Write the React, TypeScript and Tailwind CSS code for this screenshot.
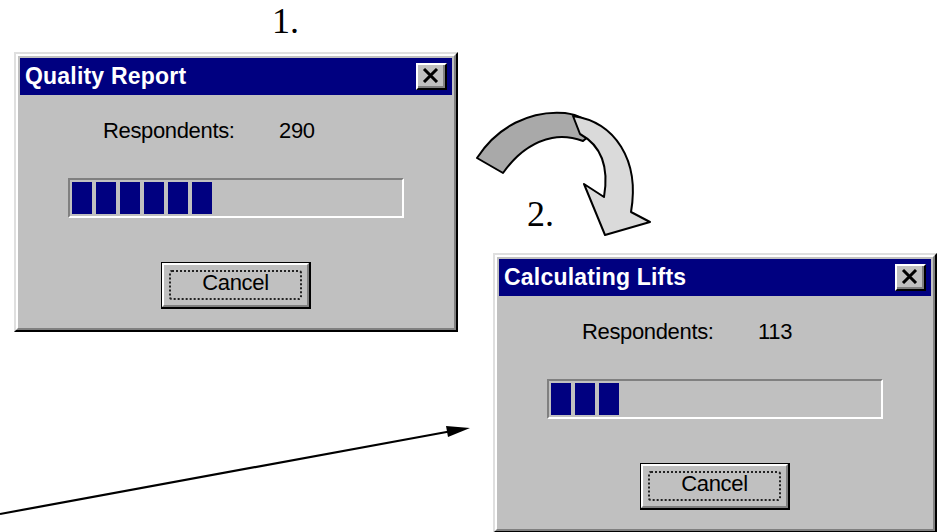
import React from "react";

type DialogProps = {
  title: string;
  count: number;
  blocks: number;
  className: string;
};

function CloseButton() {
  return (
    <div className="w-[31px] h-[27px] bg-[#c0c0c0] border-t-2 border-l-2 border-t-white border-l-white border-r-2 border-b-2 border-r-black border-b-black flex">
      <div className="flex-1 flex items-center justify-center border-r-2 border-b-2 border-r-[#808080] border-b-[#808080]">
        <svg width="17" height="15" viewBox="0 0 17 15">
          <path d="M2 1 L15 14 M15 1 L2 14" stroke="black" strokeWidth="3" />
        </svg>
      </div>
    </div>
  );
}

function ProgressDialog({ title, count, blocks, className }: DialogProps) {
  return (
    <div
      className={`absolute w-[444px] h-[280px] border-2 border-t-[#dfdfdf] border-l-[#dfdfdf] border-r-black border-b-black ${className}`}
    >
      <div className="h-full flex flex-col bg-[#c0c0c0] border-2 border-t-white border-l-white border-r-[#808080] border-b-[#808080] p-[2px] font-['Liberation_Sans',Arial,sans-serif]">
        {/* title bar */}
        <div className="h-[37px] shrink-0 bg-[#000080] flex items-center justify-between pl-[5px] pr-[5px]">
          <span className="text-white font-bold text-[23px] leading-none tracking-[0.2px]">{title}</span>
          <CloseButton />
        </div>

        {/* respondents */}
        <div className="mt-[24px] flex text-[22px] leading-[24px] tracking-[-0.35px] text-black pl-[83px]">
          <span className="w-[176px]">Respondents:</span>
          <span>{count}</span>
        </div>

        {/* progress */}
        <div className="mt-[35px] ml-[48px] w-[336px] h-[40px] border-2 border-t-[#808080] border-l-[#808080] border-r-white border-b-white p-[2px] flex gap-[4px]">
          {Array.from({ length: blocks }).map((_, i) => (
            <div key={i} className="w-[20px] h-full bg-[#000080]" />
          ))}
        </div>

        {/* cancel */}
        <div className="mt-[44px] mx-auto w-[150px] h-[47px] border-t border-l border-r-2 border-b-2 border-black flex">
          <div className="flex-1 flex border-2 border-t-white border-l-white border-r-[#808080] border-b-[#808080] p-[5px]">
            <div className="flex-1 flex items-center justify-center border-2 border-dotted border-[#222] rounded-[3px] pb-[4px] text-[22px] tracking-[-0.35px] text-black leading-none">
              Cancel
            </div>
          </div>
        </div>
      </div>
    </div>
  );
}

export default function App() {
  return (
    <div className="relative w-[938px] h-[532px] bg-white overflow-hidden">
      <span className="absolute left-[272px] top-[3px] text-[36px] leading-[36px] text-black font-['Liberation_Serif','Times_New_Roman',serif]">
        1.
      </span>
      <span className="absolute left-[527px] top-[196px] text-[36px] leading-[36px] text-black font-['Liberation_Serif','Times_New_Roman',serif]">
        2.
      </span>

      <ProgressDialog title="Quality Report" count={290} blocks={6} className="left-[14px] top-[52px]" />
      <ProgressDialog title="Calculating Lifts" count={113} blocks={3} className="left-[493px] top-[253px]" />

      {/* arrows */}
      <svg className="absolute left-0 top-0 pointer-events-none" width="938" height="532" viewBox="0 0 938 532">
        <path
          d="M477,158 C497,127 530,110 565,113 C580,115 590,122 596,130 L583,141 C572,137 562,136 552,138 C532,142 515,156 503,173 Z"
          fill="#a9a9a9"
          stroke="black"
          strokeWidth="2"
          strokeLinejoin="round"
        />
        <path
          d="M573,116 C615,122 640,160 631,212 L650,222 L605,235 L584,184 L604,197 C609,168 602,146 580,134 Z"
          fill="#dadada"
          stroke="black"
          strokeWidth="2"
          strokeLinejoin="round"
        />
        <line x1="0" y1="514" x2="452" y2="431" stroke="black" strokeWidth="2.2" />
        <path d="M470,428 L446,426 L448,437 Z" fill="black" />
      </svg>
    </div>
  );
}
